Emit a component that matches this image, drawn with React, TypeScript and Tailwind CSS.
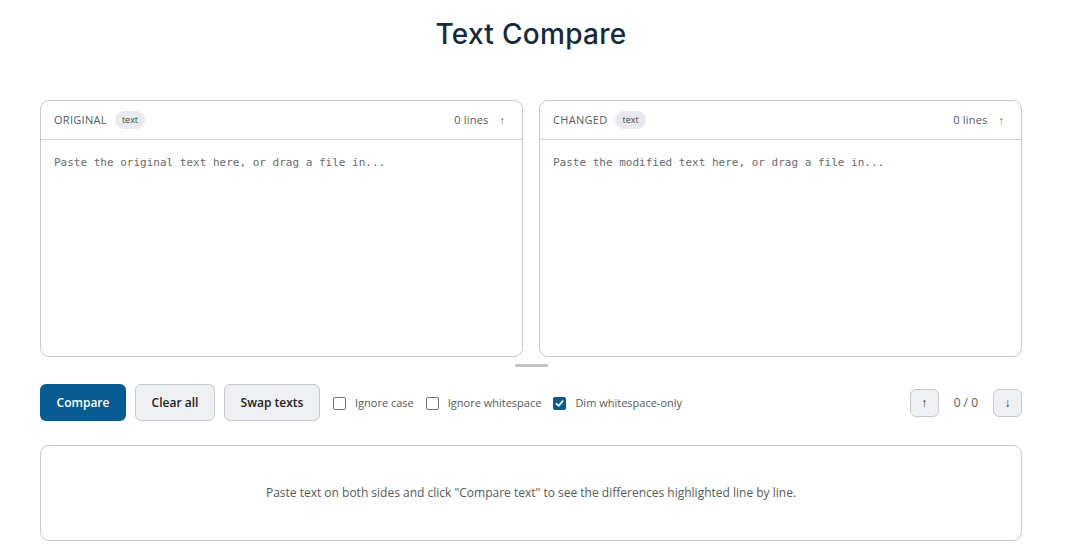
import React, { useState } from 'react';

const sans = "font-['Open_Sans','Noto_Sans',sans-serif]";
const mono = "font-['DejaVu_Sans_Mono','Liberation_Mono',monospace]";

interface PanelProps {
  label: string;
  placeholder: string;
}

const TextPanel: React.FC<PanelProps> = ({ label, placeholder }) => {
  const [value, setValue] = useState('');
  const lineCount = value ? value.split('\n').length : 0;

  return (
    <div className="flex-1 h-[257px] flex flex-col border border-[#c9c9cc] rounded-[9px] bg-white overflow-hidden">
      <div className="h-[39px] shrink-0 flex items-center px-[13px] border-b border-[#cfcfd2]">
        <span className="text-[11px] tracking-[0.3px] text-[#555a60]">{label}</span>
        <span className="ml-[8px] px-[7px] h-[18px] leading-[18px] rounded-full bg-[#e9eaef] text-[9px] text-[#444]">text</span>
        <span className="ml-auto text-[11px] tracking-[0.2px] text-[#555a60]">{lineCount} lines</span>
        <span className="ml-[11px] mr-[4px] text-[11px] text-[#666]">↑</span>
      </div>
      <textarea
        value={value}
        onChange={(e) => setValue(e.target.value)}
        placeholder={placeholder}
        spellCheck={false}
        className={`flex-1 resize-none outline-none px-[13px] pt-[15px] text-[11px] leading-[16px] text-[#333] placeholder:text-[#666a70] ${mono}`}
      />
    </div>
  );
};

const Check: React.FC<{ label: string; checked: boolean; onToggle: () => void }> = ({ label, checked, onToggle }) => (
  <label className="flex items-center cursor-pointer" onClick={onToggle}>
    <span
      className={`w-[13px] h-[13px] rounded-[2px] flex items-center justify-center ${
        checked ? 'bg-[#0b5a8e] border border-[#0b5a8e]' : 'bg-white border border-[#767676]'
      }`}
    >
      {checked && (
        <svg width="9" height="9" viewBox="0 0 10 10" fill="none">
          <path d="M1.5 5.2 4 7.6 8.6 2.4" stroke="white" strokeWidth="1.8" strokeLinecap="round" strokeLinejoin="round" />
        </svg>
      )}
    </span>
    <span className="ml-[9px] text-[11px] text-[#555a60]">{label}</span>
  </label>
);

export default function App() {
  const [ignoreCase, setIgnoreCase] = useState(false);
  const [ignoreWs, setIgnoreWs] = useState(false);
  const [dimWs, setDimWs] = useState(true);

  return (
    <div className={`w-[1071px] h-[559px] bg-white ${sans}`}>
      <div className="ml-[40px] w-[982px]">
        <h1 className="pt-[13px] h-[100px] text-center text-[28px] font-medium tracking-[0.3px] text-[#172a3c] font-['Inter',sans-serif]">
          Text Compare
        </h1>

        <div className="flex gap-[16px]">
          <TextPanel label="ORIGINAL" placeholder="Paste the original text here, or drag a file in..." />
          <TextPanel label="CHANGED" placeholder="Paste the modified text here, or drag a file in..." />
        </div>

        <div className="h-[27px] flex justify-center pt-[7px]">
          <div className="w-[33px] h-[3px] rounded-full bg-[#c4c4c6]" />
        </div>

        <div className="flex items-center h-[37px]">
          <button className="h-[37px] w-[86px] pt-[1px] rounded-[6px] bg-[#075b91] text-white text-[12px] font-semibold">
            Compare
          </button>
          <button className="ml-[9px] h-[37px] w-[80px] pt-[1px] rounded-[6px] bg-[#eff0f4] border border-[#c8c9cd] text-[12px] font-semibold text-[#222]">
            Clear all
          </button>
          <button className="ml-[9px] h-[37px] w-[96px] pt-[1px] rounded-[6px] bg-[#eff0f4] border border-[#c8c9cd] text-[12px] font-semibold text-[#222]">
            Swap texts
          </button>
          <div className="ml-[13px] pt-[1px] flex items-center gap-[12px]">
            <Check label="Ignore case" checked={ignoreCase} onToggle={() => setIgnoreCase(!ignoreCase)} />
            <Check label="Ignore whitespace" checked={ignoreWs} onToggle={() => setIgnoreWs(!ignoreWs)} />
            <Check label="Dim whitespace-only" checked={dimWs} onToggle={() => setDimWs(!dimWs)} />
          </div>
          <div className="ml-auto flex items-center">
            <button className="w-[29px] h-[28px] rounded-[6px] bg-[#eff0f4] border border-[#c8c9cd] text-[12px] text-[#333]">↑</button>
            <span className="mx-[15px] text-[12px] text-[#555a60]">0 / 0</span>
            <button className="w-[29px] h-[28px] rounded-[6px] bg-[#eff0f4] border border-[#c8c9cd] text-[12px] text-[#333]">↓</button>
          </div>
        </div>

        <div className="mt-[24px] h-[96px] rounded-[9px] border border-[#c9c9cc] flex items-center justify-center">
          <p className="text-[12px] text-[#555a60]">
            Paste text on both sides and click "Compare text" to see the differences highlighted line by line.
          </p>
        </div>
      </div>
    </div>
  );
}
